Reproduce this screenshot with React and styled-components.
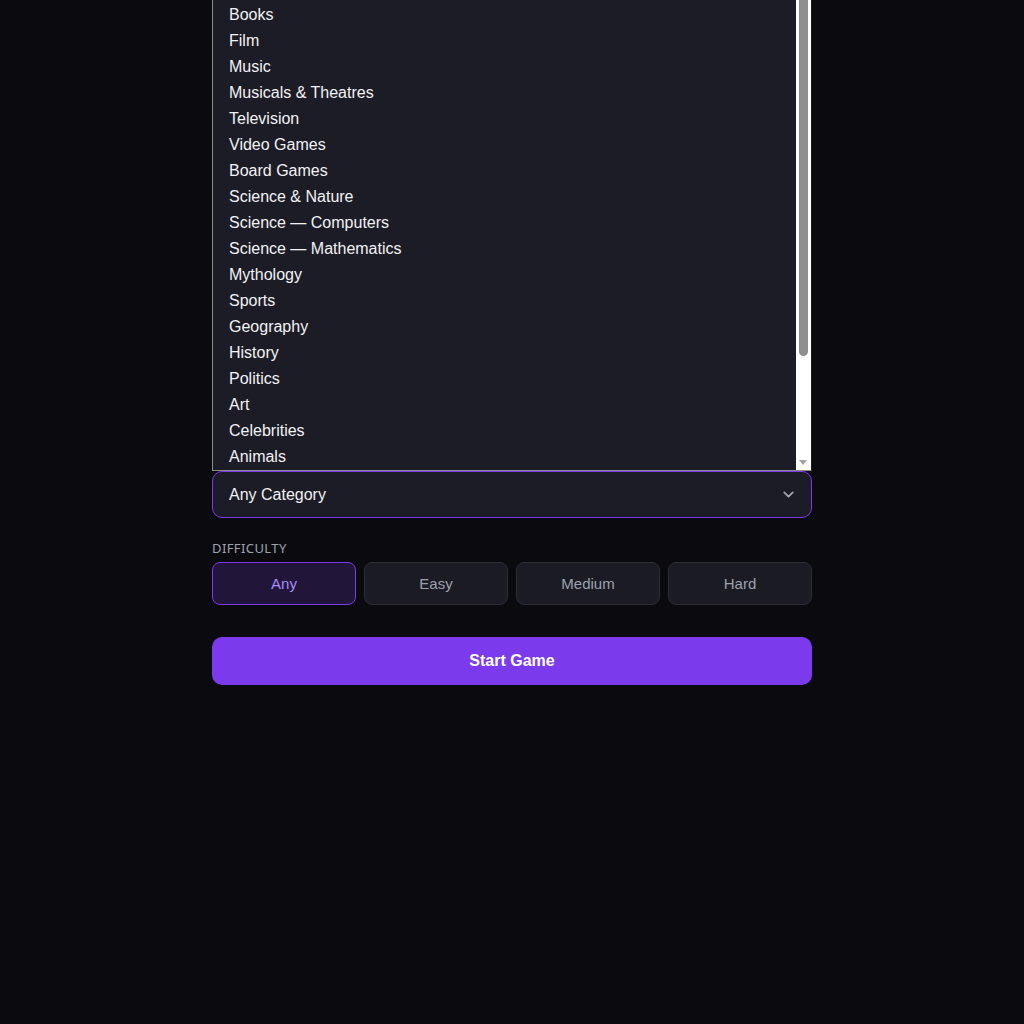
import React from "react";
import styled, { createGlobalStyle } from "styled-components";

const Global = createGlobalStyle`
  html, body { margin: 0; padding: 0; background: #0b0b0f; }
  body { font-family: "Liberation Sans", Arial, sans-serif; overflow: hidden; }
  * { box-sizing: border-box; }
`;

const Page = styled.main`
  min-height: 1024px;
  display: flex;
  justify-content: center;
  background: #0b0b0f;
`;

const Column = styled.div`
  width: 600px;
  padding-top: 471px;
  display: flex;
  flex-direction: column;
`;

const Label = styled.div`
  font-family: "Noto Sans", "Open Sans", sans-serif;
  font-size: 13px;
  line-height: 16px;
  letter-spacing: 0.4px;
  color: #9ca3af;
  text-transform: uppercase;
  margin-bottom: 6px;
  margin-top: ${(p) => p.$top || 0}px;
`;

const SelectWrap = styled.div`
  position: relative;
`;

const SelectBox = styled.div`
  height: 47px;
  border: 1px solid #7c3aed;
  border-radius: 10px;
  background: #1c1c26;
  display: flex;
  align-items: center;
  justify-content: space-between;
  padding: 0 16px;
  font-size: 16px;
  color: #f1f1f3;
`;

const Listbox = styled.div`
  position: absolute;
  left: 0;
  right: 0;
  bottom: 100%;
  height: 471px;
  display: flex;
  border: 1px solid #8a8a8a;
  border-top: none;
  border-right-color: #1a1a1a;
  background: #1c1c26;
  overflow: hidden;
`;

const Options = styled.ul`
  flex: 1;
  list-style: none;
  margin: 0;
  padding: 2px 0 0;
`;

const Option = styled.li`
  height: 26px;
  line-height: 26px;
  padding-left: 16px;
  font-size: 16px;
  color: #f2f2f4;
  white-space: nowrap;
`;

const Scrollbar = styled.div`
  width: 15px;
  background: #ffffff;
  position: relative;
  display: flex;
  flex-direction: column;
  align-items: center;
`;

const Thumb = styled.div`
  width: 9px;
  height: 356px;
  background: #8f8f8f;
  border-radius: 0 0 5px 5px;
`;

const ArrowDown = styled.div`
  position: absolute;
  bottom: 5px;
  left: 3px;
  width: 0;
  height: 0;
  border-left: 4.5px solid transparent;
  border-right: 4.5px solid transparent;
  border-top: 5px solid #a3a3a3;
`;

const Chevron = styled.svg`
  width: 17px;
  height: 17px;
  color: #a3a7b3;
  margin-right: -2px;
`;

const DiffRow = styled.div`
  display: grid;
  grid-template-columns: repeat(4, 1fr);
  gap: 8px;
`;

const DiffButton = styled.button`
  height: 43px;
  border-radius: 8px;
  border: 1px solid ${(p) => (p.$active ? "#7c3aed" : "#2b2b35")};
  background: ${(p) => (p.$active ? "#21163a" : "#1b1b23")};
  color: ${(p) => (p.$active ? "#a78bfa" : "#9ba1b0")};
  font-family: "Liberation Sans", Arial, sans-serif;
  font-size: 15px;
  cursor: pointer;
`;

const StartButton = styled.button`
  margin-top: 32px;
  height: 48px;
  border: none;
  border-radius: 10px;
  background: #7c3aed;
  color: #ffffff;
  font-family: "Liberation Sans", Arial, sans-serif;
  font-weight: 700;
  font-size: 16px;
  cursor: pointer;
`;

const categories = [
  "Books",
  "Film",
  "Music",
  "Musicals & Theatres",
  "Television",
  "Video Games",
  "Board Games",
  "Science & Nature",
  "Science — Computers",
  "Science — Mathematics",
  "Mythology",
  "Sports",
  "Geography",
  "History",
  "Politics",
  "Art",
  "Celebrities",
  "Animals",
];

const levels = ["Any", "Easy", "Medium", "Hard"];

export default function App() {
  return (
    <Page>
      <Global />
      <Column>
        <SelectWrap>
          <Listbox>
            <Options>
              {categories.map((c) => (
                <Option key={c}>{c}</Option>
              ))}
            </Options>
            <Scrollbar>
              <Thumb />
              <ArrowDown />
            </Scrollbar>
          </Listbox>
          <SelectBox>
            <span>Any Category</span>
            <Chevron viewBox="0 0 24 24" fill="none" stroke="currentColor" strokeWidth="2.5" strokeLinecap="round" strokeLinejoin="round">
              <path d="M6 9l6 6 6-6" />
            </Chevron>
          </SelectBox>
        </SelectWrap>
        <Label $top={22}>Difficulty</Label>
        <DiffRow>
          {levels.map((l) => (
            <DiffButton key={l} $active={l === "Any"}>
              {l}
            </DiffButton>
          ))}
        </DiffRow>
        <StartButton>Start Game</StartButton>
      </Column>
    </Page>
  );
}
